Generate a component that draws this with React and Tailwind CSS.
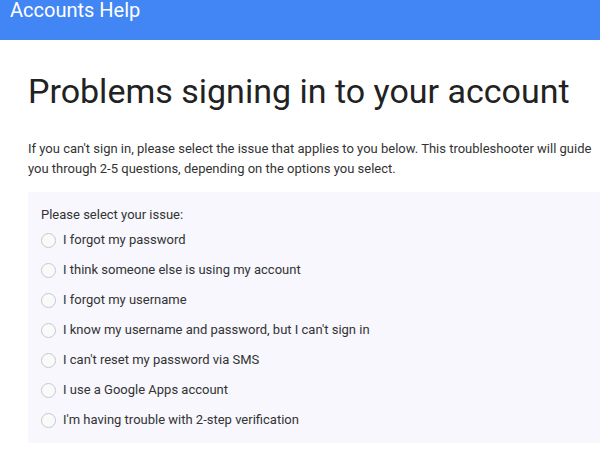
import React, { useState } from "react";

const issues = [
  "I forgot my password",
  "I think someone else is using my account",
  "I forgot my username",
  "I know my username and password, but I can't sign in",
  "I can't reset my password via SMS",
  "I use a Google Apps account",
  "I'm having trouble with 2-step verification",
];

function App() {
  const [selected, setSelected] = useState(null);

  return (
    <div className="h-[450px] overflow-hidden bg-white font-['Roboto',sans-serif]">
      {/* Top bar */}
      <div className="h-10 bg-[#4285f4] pl-[10px]">
        <span className="block text-[20px] leading-[20px] text-white">Accounts Help</span>
      </div>

      <div className="pl-7">
        <h1 className="mt-[29px] whitespace-nowrap text-[34px] leading-[44px] font-normal text-[#222]">
          Problems signing in to your account
        </h1>
        <p className="mt-[26px] text-[13px] leading-5 text-[#333]">
          If you can't sign in, please select the issue that applies to you below. This troubleshooter will guide you
          through 2-5 questions, depending on the options you select.
        </p>

        {/* Issue picker */}
        <div className="mt-[13px] bg-[#f7f7fd] pl-[13px] pt-[13px] pb-2">
          <div className="text-[13px] leading-5 text-[#333]">Please select your issue:</div>
          {issues.map((label, i) => (
            <label key={i} className="flex h-[30px] items-center gap-[7px] text-[13px] text-[#333] cursor-pointer">
              <span
                onClick={() => setSelected(i)}
                className="flex h-[15px] w-[15px] items-center justify-center rounded-full border border-[#c8c8c8] bg-[#fafafa]"
              >
                {selected === i && <span className="h-[7px] w-[7px] rounded-full bg-[#4285f4]" />}
              </span>
              <span onClick={() => setSelected(i)}>{label}</span>
            </label>
          ))}
        </div>
      </div>
    </div>
  );
}

export default App;
